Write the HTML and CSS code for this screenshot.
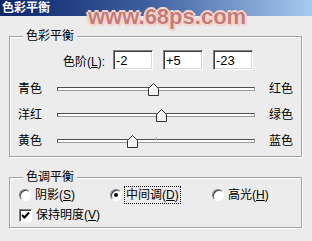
FILE: index.html
```html
<!DOCTYPE html>
<html lang="zh">
  <head>
    <meta charset="UTF-8" />
    <title>色彩平衡</title>
    <link rel="stylesheet" href="styles.css">
  </head>
  <body>
    <div class="window">
      <div class="titlebar">色彩平衡</div>
      <div class="watermark">www.68ps.com</div>

      <fieldset class="group group-balance">
        <legend>色彩平衡</legend>
        <div class="levels">
          <span class="levels-label">色阶(<u>L</u>):</span>
          <input class="field" type="text" value="-2" readonly />
          <input class="field" type="text" value="+5" readonly />
          <input class="field" type="text" value="-23" readonly />
        </div>

        <div class="slider-row">
          <span class="side">青色</span>
          <div class="track">
            <span class="thumb" style="left: 90px"><svg width="11" height="13" viewBox="0 0 11 13"><polygon points="5.5,0.5 10.5,5.5 10.5,12.5 0.5,12.5 0.5,5.5" fill="#f3f3f3" stroke="#303030"/><path d="M1.5 11.5V6L5.5 2" fill="none" stroke="#fff"/></svg></span>
          </div>
          <span class="side">红色</span>
        </div>
        <div class="slider-row">
          <span class="side">洋红</span>
          <div class="track">
            <span class="thumb" style="left: 98px"><svg width="11" height="13" viewBox="0 0 11 13"><polygon points="5.5,0.5 10.5,5.5 10.5,12.5 0.5,12.5 0.5,5.5" fill="#f3f3f3" stroke="#303030"/><path d="M1.5 11.5V6L5.5 2" fill="none" stroke="#fff"/></svg></span>
          </div>
          <span class="side">绿色</span>
        </div>
        <div class="slider-row">
          <span class="side">黄色</span>
          <div class="track">
            <span class="tick"></span>
            <span class="thumb" style="left: 69px"><svg width="11" height="13" viewBox="0 0 11 13"><polygon points="5.5,0.5 10.5,5.5 10.5,12.5 0.5,12.5 0.5,5.5" fill="#f3f3f3" stroke="#303030"/><path d="M1.5 11.5V6L5.5 2" fill="none" stroke="#fff"/></svg></span>
          </div>
          <span class="side">蓝色</span>
        </div>
      </fieldset>

      <fieldset class="group group-tone">
        <legend>色调平衡</legend>
        <div class="tones">
          <span class="opt"><span class="radio"></span><span>阴影(<u>S</u>)</span></span>
          <span class="opt"><span class="radio on"></span><span class="focus">中间调(<u>D</u>)</span></span>
          <span class="opt"><span class="radio"></span><span>高光(<u>H</u>)</span></span>
        </div>
        <div class="keep">
          <span class="opt"><span class="check"><svg width="9" height="9" viewBox="0 0 9 9"><path d="M1 4L3.5 6.5L8 1.5" fill="none" stroke="#000" stroke-width="2"/></svg></span><span>保持明度(<u>V</u>)</span></span>
        </div>
      </fieldset>
    </div>
  </body>
</html>
```

FILE: styles.css
```css
body {
  margin: 0;
  background-color: #ececec;
  font-family: "Liberation Sans", "Noto Sans CJK SC", sans-serif;
  font-size: 12px;
  color: #000;
}

.window {
  position: relative;
  width: 312px;
  height: 241px;
  overflow: hidden;
}

.titlebar {
  height: 16px;
  line-height: 16px;
  padding-left: 2px;
  color: #fff;
  font-weight: bold;
  background-image: linear-gradient(90deg, #0a246a 0%, #3a5c9c 45%, #a6caf0 100%);
}

/* watermark lies over the title bar and the dialog */
.watermark {
  position: absolute;
  left: 88px;
  top: 6px;
  font-family: "Liberation Sans", Arial, sans-serif;
  font-weight: bold;
  font-size: 22px;
  line-height: 22px;
  color: #c47c78;
  text-shadow:
    1px 0 0 #f7dcd5,
    -1px 0 0 #f7dcd5,
    0 1px 0 #f7dcd5,
    0 -1px 0 #f7dcd5,
    2px 0 0 #f3d2ca,
    -2px 0 0 #f3d2ca,
    0 2px 0 #f3d2ca,
    0 -2px 0 #f3d2ca,
    1px 1px 2px #c9928c,
    -1px -1px 2px #c9928c;
}

.group {
  box-sizing: border-box;
  width: 293px;
  margin: 0 0 0 9px;
  padding: 0;
  border: 1px solid #a3a3a3;
  box-shadow: inset 1px 1px 0 #fff, 1px 1px 0 #fff;
  min-inline-size: 0;
}

.group legend {
  margin-left: 13px;
  padding: 0 3px;
  line-height: 14px;
  height: 14px;
  background-color: #ececec;
}

.group-balance {
  margin-top: 13px;
  padding-bottom: 2px;
}

.group-tone {
  margin-top: 13px;
  padding-bottom: 2px;
}

.levels {
  display: flex;
  align-items: center;
  gap: 10px;
  height: 20px;
  margin-top: 7px;
}

.levels-label {
  width: 95px;
  margin-right: -2px;
  text-align: right;
}

.field {
  box-sizing: border-box;
  width: 40px;
  height: 20px;
  margin: 0;
  padding: 0 2px;
  border: 1px solid;
  border-color: #808080 #fff #fff #808080;
  box-shadow: inset 1px 1px 0 #404040, inset -1px -1px 0 #d8d8d8;
  background-color: #fff;
  font-family: "Liberation Sans", Arial, sans-serif;
  font-size: 13px;
  color: #000;
  outline: none;
}

.slider-row {
  display: flex;
  align-items: center;
  height: 26px;
  padding-left: 8px;
}

.levels + .slider-row {
  margin-top: 6px;
}

.side {
  width: 24px;
  line-height: 14px;
}

.track {
  position: relative;
  box-sizing: border-box;
  width: 198px;
  height: 4px;
  margin: 0 14px 0 15px;
  border: 1px solid;
  border-color: #505050 #9a9a9a #9a9a9a #505050;
  background-color: #fff;
}

.thumb {
  position: absolute;
  top: -5px;
  width: 11px;
  height: 13px;
}

.thumb svg {
  display: block;
}

.tick {
  position: absolute;
  left: 98px;
  top: -3px;
  width: 1px;
  height: 3px;
  background-color: #b0b0b0;
}

.tones {
  display: grid;
  grid-template-columns: 91px 102px auto;
  align-items: center;
  height: 20px;
  margin-top: 1px;
  padding-left: 9px;
}

.keep {
  display: flex;
  align-items: center;
  height: 20px;
  padding-left: 9px;
}

.opt {
  display: flex;
  align-items: center;
  gap: 4px;
  line-height: 14px;
}

.radio {
  box-sizing: border-box;
  width: 12px;
  height: 12px;
  border-radius: 50%;
  border: 1px solid;
  border-color: #808080 #fff #fff #808080;
  box-shadow: inset 1px 1px 0 #404040;
  background-color: #fff;
  display: flex;
  align-items: center;
  justify-content: center;
}

.radio.on::after {
  content: "";
  width: 4px;
  height: 4px;
  border-radius: 50%;
  background-color: #000;
}

.focus {
  outline: 1px dotted #000;
  outline-offset: 1px;
}

.check {
  box-sizing: border-box;
  width: 13px;
  height: 13px;
  border: 1px solid;
  border-color: #808080 #fff #fff #808080;
  box-shadow: inset 1px 1px 0 #404040;
  background-color: #fff;
  display: flex;
  align-items: center;
  justify-content: center;
}

.check svg {
  display: block;
}
```
